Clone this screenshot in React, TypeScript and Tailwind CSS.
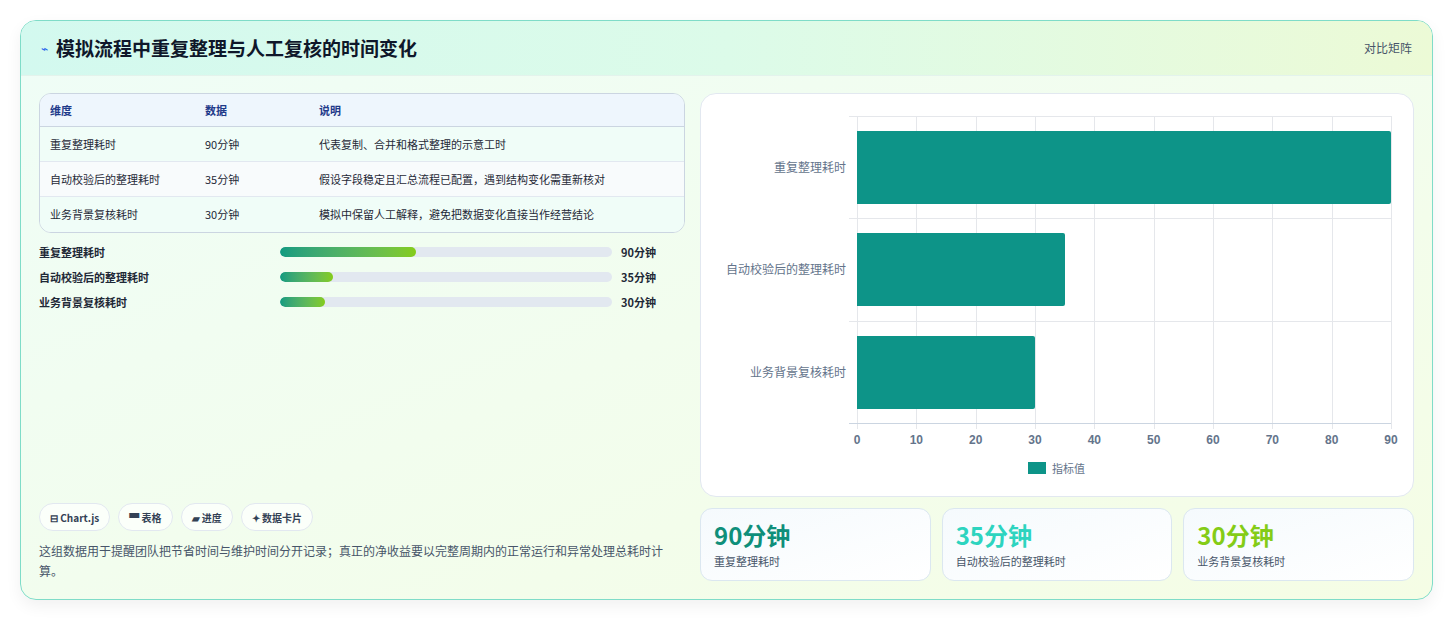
import React from "react";

const rows = [
  ["重复整理耗时", "90分钟", "代表复制、合并和格式整理的示意工时", 90],
  ["自动校验后的整理耗时", "35分钟", "假设字段稳定且汇总流程已配置，遇到结构变化需重新核对", 35],
  ["业务背景复核耗时", "30分钟", "模拟中保留人工解释，避免把数据变化直接当作经营结论", 30],
] as const;

const font = { fontFamily: '"Noto Sans CJK SC", "Noto Sans", sans-serif' };

export default function App() {
  const W = 534, H = 307;
  return (
    <div className="w-[1453px] h-[621px] bg-white pt-5 pl-5" style={font}>
      <div className="w-[1413px] h-[580px] rounded-2xl border border-[#7fdcc8] overflow-hidden flex flex-col bg-gradient-to-br from-[#effdf7] to-[#f5fde5] shadow-[0_6px_16px_rgba(0,0,0,0.06)]">
        <div className="h-[55px] shrink-0 flex items-center justify-between px-5 bg-gradient-to-r from-[#d3f9ef] via-[#dcfbe9] to-[#ecfad6] border-b border-[#e3f3ec]">
          <div className="flex items-center gap-2">
            <span className="text-[#2563eb] text-[12px]">⌁</span>
            <span className="text-[19px] font-bold text-[#0f172a]">模拟流程中重复整理与人工复核的时间变化</span>
          </div>
          <span className="text-[12px] text-[#475569]">对比矩阵</span>
        </div>
        <div className="flex-1 flex gap-[15px] px-[18px] pt-[17px] pb-[18px]">
          <div className="w-[646px] flex flex-col">
            <div className="rounded-xl border border-[#cbd5e1] overflow-hidden bg-white/60">
              <div className="grid grid-cols-[155px_114px_1fr] h-[33px] items-center px-[10px] bg-[#eef6fd] border-b border-[#cbd5e1] text-[11px] font-semibold text-[#1e3a8a]">
                <span>维度</span><span>数据</span><span>说明</span>
              </div>
              {rows.map((r, i) => (
                <div key={i} className={`grid grid-cols-[155px_114px_1fr] h-[35px] items-center px-[10px] text-[11px] text-[#1f2937] ${i < 2 ? "border-b border-[#e2e8f0]" : ""} ${i === 1 ? "bg-[#f8fbfc]" : "bg-[#f0fdf8]"}`}>
                  <span>{r[0]}</span><span>{r[1]}</span><span>{r[2]}</span>
                </div>
              ))}
            </div>
            <div className="flex flex-col gap-[11px] mt-[12px]">
              {rows.map((r, i) => (
                <div key={i} className="flex items-center h-[14px]">
                  <span className="w-[241px] text-[11px] font-semibold text-[#1f2937]">{r[0]}</span>
                  <div className="w-[332px] h-[10px] rounded-full bg-[#e2e8f0] overflow-hidden">
                    <div className="h-full rounded-full bg-gradient-to-r from-[#0f9b80] to-[#84cc16]" style={{ width: `${(r[3] / 220) * 100}%` }} />
                  </div>
                  <span className="ml-[9px] text-[11px] font-bold text-[#1f2937]">{r[1]}</span>
                </div>
              ))}
            </div>
            <div className="flex-1" />
            <div className="flex gap-[8px]">
              {["⊟ Chart.js", "▀ 表格", "▰ 进度", "✦ 数据卡片"].map((t) => (
                <span key={t} className="h-[28px] px-[10px] rounded-full border border-[#e2e8f0] bg-white/70 flex items-center text-[10px] font-semibold text-[#334155]">{t}</span>
              ))}
            </div>
            <p className="mt-[10px] text-[12px] leading-[20px] text-[#475569]">这组数据用于提醒团队把节省时间与维护时间分开记录；真正的净收益要以完整周期内的正常运行和异常处理总耗时计算。</p>
          </div>
          <div className="flex-1 flex flex-col gap-[11px]">
            <div className="h-[404px] rounded-2xl border border-[#e2e8f0] bg-white relative">
              <div className="absolute left-[156px] top-[22px]" style={{ width: W, height: H }}>
                {Array.from({ length: 10 }).map((_, k) => (
                  <div key={k} className="absolute top-0 w-px bg-[#e5e7eb]" style={{ left: (k * W) / 9, height: H + 6 }}>
                    <span className="absolute top-[315px] -translate-x-1/2 text-[12px] text-[#64748b] font-semibold" style={{ fontFamily: '"Liberation Sans", sans-serif' }}>{k * 10}</span>
                  </div>
                ))}
                {[0, 1, 2, 3].map((k) => (
                  <div key={k} className="absolute h-px bg-[#e5e7eb]" style={{ top: (k * H) / 3, left: -8, width: W + 8 }} />
                ))}
                <div className="absolute h-px bg-[#cbd5e1]" style={{ top: H, left: -8, width: W + 8 }} />
                {rows.map((r, i) => (
                  <React.Fragment key={i}>
                    <div className="absolute bg-[#0d9488] rounded-r-[2px]" style={{ left: 0, top: (i * H) / 3 + 15, height: 73, width: (r[3] / 90) * W }} />
                    <span className="absolute right-[545px] text-[12px] text-[#64748b] whitespace-nowrap" style={{ top: (i * H) / 3 + 42 }}>{r[0]}</span>
                  </React.Fragment>
                ))}
              </div>
              <div className="absolute left-[327px] top-[366px] flex items-center gap-[6px]">
                <span className="w-[18px] h-[12px] bg-[#0d9488]" />
                <span className="text-[11px] text-[#64748b]">指标值</span>
              </div>
            </div>
            <div className="grid grid-cols-3 gap-[11px]">
              {[["#0f8f7a", "#0d9488"], ["#2dd4bf", "#2dd4bf"], ["#84cc16", "#84cc16"]].map((c, i) => (
                <div key={i} className="h-[73px] rounded-xl border border-[#dbe7f0] bg-gradient-to-br from-[#f5fafd] to-white px-[13px] pt-[9px]">
                  <div className="text-[24px] font-bold leading-[34px]" style={{ color: c[0] }}>{rows[i][1]}</div>
                  <div className="text-[11px] text-[#475569] mt-[1px]">{rows[i][0]}</div>
                </div>
              ))}
            </div>
          </div>
        </div>
      </div>
    </div>
  );
}
